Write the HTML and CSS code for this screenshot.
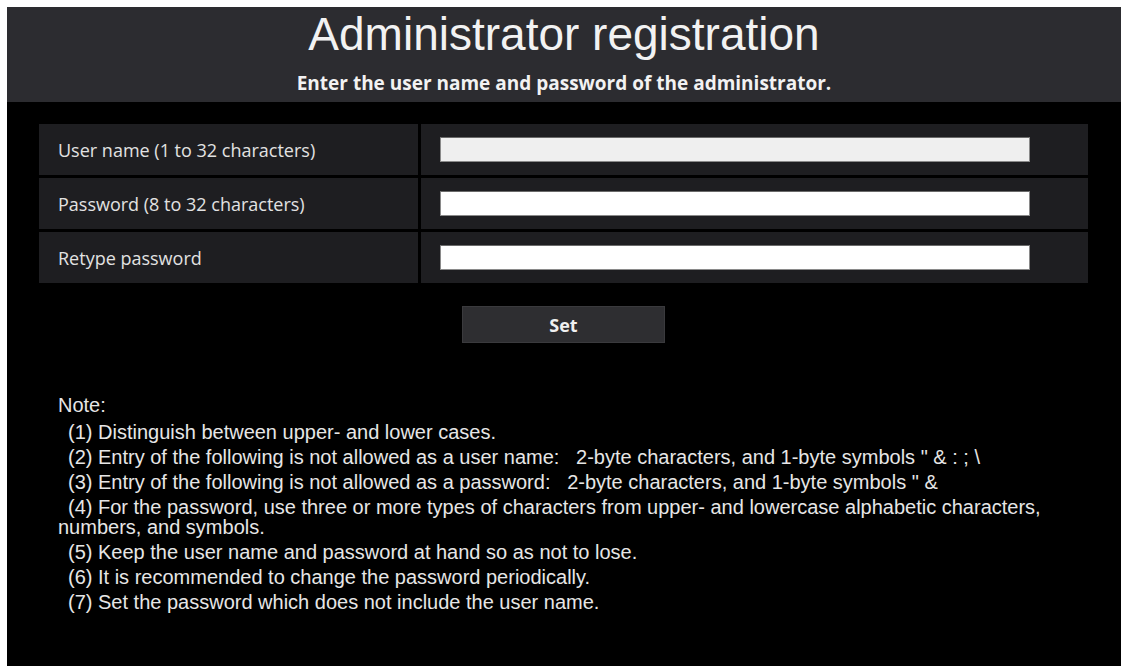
FILE: index.html
```html
<!DOCTYPE html>
<html>
<head>
<meta charset="utf-8">
<link rel="stylesheet" href="styles.css">
</head>
<body>
<div class="panel">
  <div class="header">
    <h1 class="title">Administrator registration</h1>
    <p class="subtitle">Enter the user name and password of the administrator.</p>
  </div>
  <div class="main">
    <div class="form">
      <div class="row">
        <div class="label">User name (1 to 32 characters)</div>
        <div class="field"><input class="input input-first" type="text"></div>
      </div>
      <div class="row">
        <div class="label">Password (8 to 32 characters)</div>
        <div class="field"><input class="input" type="password"></div>
      </div>
      <div class="row">
        <div class="label">Retype password</div>
        <div class="field"><input class="input" type="password"></div>
      </div>
    </div>
    <div class="actions">
      <button class="btn" type="button">Set</button>
    </div>
    <div class="notes">
      <div class="note-head">Note:</div>
      <div class="note">(1) Distinguish between upper- and lower cases.</div>
      <div class="note">(2) Entry of the following is not allowed as a user name:&nbsp;&nbsp; 2-byte characters, and 1-byte symbols " &amp; : ; \</div>
      <div class="note">(3) Entry of the following is not allowed as a password:&nbsp;&nbsp; 2-byte characters, and 1-byte symbols " &amp;</div>
      <div class="note">(4) For the password, use three or more types of characters from upper- and lowercase alphabetic characters, numbers, and symbols.</div>
      <div class="note">(5) Keep the user name and password at hand so as not to lose.</div>
      <div class="note">(6) It is recommended to change the password periodically.</div>
      <div class="note">(7) Set the password which does not include the user name.</div>
    </div>
  </div>
</div>
</body>
</html>
```

FILE: styles.css
```css
* { box-sizing: border-box; }
html, body {
  margin: 0;
  padding: 0;
  background: #ffffff;
}
body {
  font-family: "Liberation Sans", Arial, sans-serif;
  color: #e6e6e6;
}
.panel {
  width: 1114px;
  height: 659px;
  margin: 7px 0 0 7px;
  background: #000000;
  display: flex;
  flex-direction: column;
}
.header {
  height: 95px;
  background: #2c2c30;
  text-align: center;
  color: #f2f2f2;
  padding-top: 3px;
}
.title {
  margin: 0;
  font-size: 46px;
  font-weight: normal;
  line-height: 48px;
}
.subtitle {
  margin: 14px 0 0;
  font-family: "Open Sans", "Liberation Sans", sans-serif;
  font-size: 19px;
  font-weight: bold;
  line-height: 22px;
}
.main {
  flex: 1;
  padding: 22px 33px 0 32px;
}
.form {
  display: flex;
  flex-direction: column;
  gap: 3px;
}
.row {
  display: flex;
  gap: 3px;
  height: 51px;
}
.label {
  width: 379px;
  background: #1e1e21;
  display: flex;
  align-items: center;
  padding-left: 19px;
  font-family: "Open Sans", "Liberation Sans", sans-serif;
  font-size: 18px;
  color: #e2e2e2;
}
.field {
  flex: 1;
  background: #1e1e21;
  display: flex;
  align-items: center;
  padding-left: 19px;
}
.input {
  width: 590px;
  height: 25px;
  border: 1px solid #8a8a8a;
  border-top-color: #6a6a6a;
  background: #ffffff;
  padding: 0 4px;
  font: 14px "Liberation Sans", Arial, sans-serif;
  outline: none;
}
.input-first {
  background: #efefef;
}
.actions {
  display: flex;
  justify-content: center;
  padding-top: 23px;
}
.btn {
  width: 203px;
  height: 37px;
  background: #2e2e31;
  border: 1px solid #3a3a3d;
  color: #f0f0f0;
  font: bold 18px "Open Sans", "Liberation Sans", sans-serif;
  padding: 0;
}
.notes {
  padding: 52px 0 0 19px;
  font-size: 20px;
  line-height: 20px;
  color: #e6e6e6;
}
.note-head {
  margin-bottom: 7px;
}
.note {
  text-indent: 10px;
  margin-bottom: 5px;
}
```
